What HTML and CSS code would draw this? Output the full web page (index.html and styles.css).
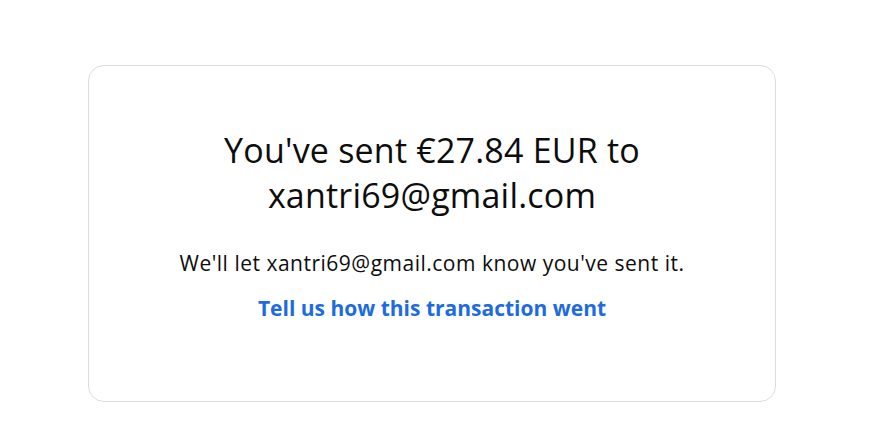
FILE: index.html
```html
<!DOCTYPE html>
<html lang="en">
<head>
<meta charset="utf-8">
<title>Sent</title>
<link rel="stylesheet" href="styles.css">
</head>
<body>
<main class="page">
  <section class="card">
    <h1 class="title">You've sent €27.84 EUR to xantri69@gmail.com</h1>
    <p class="note">We'll let xantri69@gmail.com know you've sent it.</p>
    <a class="link" href="#">Tell us how this transaction went</a>
  </section>
</main>
</body>
</html>
```
FILE: styles.css
```css
html, body {
  margin: 0;
  padding: 0;
  background: #ffffff;
}
body {
  font-family: "Open Sans", Lato, sans-serif;
  color: #0d0d0d;
}
.page {
  padding: 65px 0 0 88px;
}
.card {
  box-sizing: border-box;
  width: 688px;
  height: 337px;
  border: 1px solid #dcdcdc;
  border-radius: 16px;
  display: flex;
  flex-direction: column;
  align-items: center;
  padding-top: 62px;
}
.title {
  margin: 0;
  width: 460px;
  text-align: center;
  font-size: 34px;
  line-height: 45px;
  font-weight: 400;
  letter-spacing: 0.2px;
}
.note {
  margin: 32px 0 0;
  font-size: 21px;
  line-height: 26px;
  letter-spacing: 0.5px;
}
.link {
  margin-top: 19px;
  font-size: 21px;
  line-height: 26px;
  font-weight: 700;
  color: #1c6ce0;
  text-decoration: none;
}
```
